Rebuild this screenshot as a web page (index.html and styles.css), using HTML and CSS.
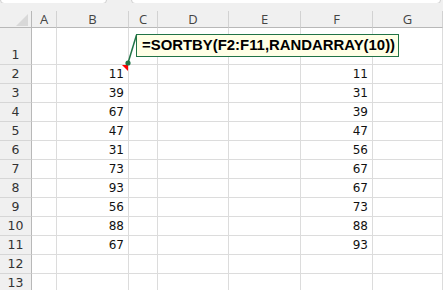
FILE: index.html
```html
<!DOCTYPE html>
<html lang="en">
<head>
  <meta charset="UTF-8" />
  <title>SORTBY RANDARRAY</title>
  <link rel="stylesheet" href="styles.css">
</head>
<body>
  <div class="sheet">
    <div class="toolbar">
      <div class="namebox"></div>
      <div class="fxbar"></div>
    </div>
    <div class="band"></div>
    <div class="grid">
      <div class="corner"><span class="corner-tri"></span></div>
      <div class="colhead">A</div>
      <div class="colhead">B</div>
      <div class="colhead">C</div>
      <div class="colhead">D</div>
      <div class="colhead">E</div>
      <div class="colhead">F</div>
      <div class="colhead">G</div>

      <div class="rowhead">1</div><div class="cell"></div><div class="cell"></div><div class="cell"></div><div class="cell"></div><div class="cell"></div><div class="cell"></div><div class="cell"></div>
      <div class="rowhead">2</div><div class="cell"></div><div class="cell num note">11</div><div class="cell"></div><div class="cell"></div><div class="cell"></div><div class="cell num">11</div><div class="cell"></div>
      <div class="rowhead">3</div><div class="cell"></div><div class="cell num">39</div><div class="cell"></div><div class="cell"></div><div class="cell"></div><div class="cell num">31</div><div class="cell"></div>
      <div class="rowhead">4</div><div class="cell"></div><div class="cell num">67</div><div class="cell"></div><div class="cell"></div><div class="cell"></div><div class="cell num">39</div><div class="cell"></div>
      <div class="rowhead">5</div><div class="cell"></div><div class="cell num">47</div><div class="cell"></div><div class="cell"></div><div class="cell"></div><div class="cell num">47</div><div class="cell"></div>
      <div class="rowhead">6</div><div class="cell"></div><div class="cell num">31</div><div class="cell"></div><div class="cell"></div><div class="cell"></div><div class="cell num">56</div><div class="cell"></div>
      <div class="rowhead">7</div><div class="cell"></div><div class="cell num">73</div><div class="cell"></div><div class="cell"></div><div class="cell"></div><div class="cell num">67</div><div class="cell"></div>
      <div class="rowhead">8</div><div class="cell"></div><div class="cell num">93</div><div class="cell"></div><div class="cell"></div><div class="cell"></div><div class="cell num">67</div><div class="cell"></div>
      <div class="rowhead">9</div><div class="cell"></div><div class="cell num">56</div><div class="cell"></div><div class="cell"></div><div class="cell"></div><div class="cell num">73</div><div class="cell"></div>
      <div class="rowhead">10</div><div class="cell"></div><div class="cell num">88</div><div class="cell"></div><div class="cell"></div><div class="cell"></div><div class="cell num">88</div><div class="cell"></div>
      <div class="rowhead">11</div><div class="cell"></div><div class="cell num">67</div><div class="cell"></div><div class="cell"></div><div class="cell"></div><div class="cell num">93</div><div class="cell"></div>
      <div class="rowhead">12</div><div class="cell"></div><div class="cell"></div><div class="cell"></div><div class="cell"></div><div class="cell"></div><div class="cell"></div><div class="cell"></div>
      <div class="rowhead">13</div><div class="cell"></div><div class="cell"></div><div class="cell"></div><div class="cell"></div><div class="cell"></div><div class="cell"></div><div class="cell"></div>
    </div>

    <div class="callout">=SORTBY(F2:F11,RANDARRAY(10))</div>
    <svg class="leader" width="443" height="290" viewBox="0 0 443 290">
      <line x1="136.5" y1="35" x2="128" y2="63" stroke="#217346" stroke-width="1.5" />
      <circle cx="128" cy="63" r="2.6" fill="#217346" />
    </svg>
  </div>
</body>
</html>
```

FILE: styles.css
```css
body {
  margin: 0;
  background: #ffffff;
  font-family: "DejaVu Sans", Verdana, sans-serif;
  color: #111;
}

.sheet {
  position: relative;
  width: 443px;
  height: 290px;
  overflow: hidden;
}

.toolbar {
  height: 3px;
  background: #f0f0f0;
  display: flex;
  gap: 24px;
  overflow: hidden;
}

.namebox, .fxbar {
  height: 6px;
  margin-top: -4px;
  background: #ffffff;
  border: 1px solid #cfcfcf;
  border-radius: 4px;
}

.namebox {
  width: 105px;
}

.fxbar {
  flex: 1;
  margin-right: 2px;
}

.band {
  height: 8px;
  background: #f0f0f0;
}

.grid {
  display: grid;
  grid-template-columns: 32px 25px 72px 29px 71px 72px 72px 70px;
  grid-template-rows: 17px 37px repeat(12, 19px);
}

.grid > div {
  box-sizing: border-box;
  border-right: 1px solid #dcdcdc;
  border-bottom: 1px solid #dcdcdc;
}

.corner {
  position: relative;
  background: #f0f0f0;
  border-right-color: #b8b8b8 !important;
  border-bottom-color: #b8b8b8 !important;
}

.corner-tri {
  position: absolute;
  right: 3px;
  bottom: 1px;
  width: 0;
  height: 0;
  border-left: 12px solid transparent;
  border-bottom: 12px solid #d8d8d8;
}

.colhead {
  background: #f0f0f0;
  border-right-color: #d2d2d2 !important;
  border-bottom-color: #b8b8b8 !important;
  font-family: "Open Sans", "Liberation Sans", sans-serif;
  font-size: 13px;
  color: #444;
  text-align: center;
  line-height: 16px;
}

.rowhead {
  background: #f0f0f0;
  border-right-color: #b8b8b8 !important;
  border-bottom-color: #d6d6d6 !important;
  font-size: 12.5px;
  color: #333;
  text-align: center;
  display: flex;
  align-items: flex-end;
  justify-content: center;
  padding-bottom: 2px;
}

.cell {
  position: relative;
  font-size: 12px;
}

.num {
  display: flex;
  align-items: flex-end;
  justify-content: flex-end;
  padding: 0 4px 2px 0;
}

.note::after {
  content: "";
  position: absolute;
  top: 0;
  right: 0;
  width: 0;
  height: 0;
  border-left: 6px solid transparent;
  border-top: 6px solid #ff0000;
}

.callout {
  position: absolute;
  left: 136px;
  top: 34px;
  width: 263px;
  height: 23px;
  box-sizing: border-box;
  border: 1px solid #217346;
  background: #ffffe6;
  font-family: "Liberation Sans", Arial, sans-serif;
  font-weight: bold;
  font-size: 14.9px;
  line-height: 21px;
  padding-left: 5px;
  color: #000;
  white-space: nowrap;
}

.leader {
  position: absolute;
  left: 0;
  top: 0;
  pointer-events: none;
}
```
